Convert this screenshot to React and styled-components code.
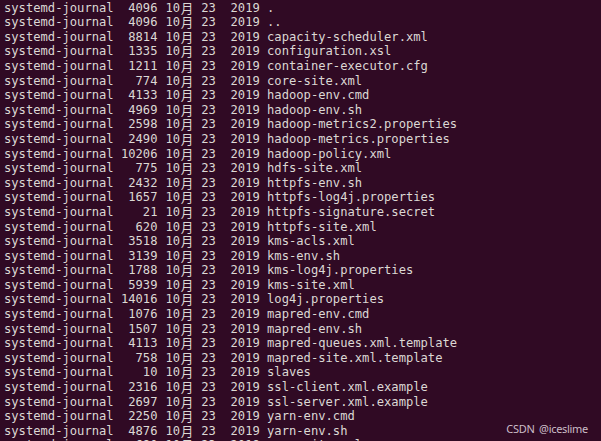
import React from "react";
import styled, { createGlobalStyle } from "styled-components";

const GlobalStyle = createGlobalStyle`
  html, body {
    margin: 0;
    padding: 0;
    background: #300a24;
  }
`;

const files = [
  [4096, "."],
  [4096, ".."],
  [8814, "capacity-scheduler.xml"],
  [1335, "configuration.xsl"],
  [1211, "container-executor.cfg"],
  [774, "core-site.xml"],
  [4133, "hadoop-env.cmd"],
  [4969, "hadoop-env.sh"],
  [2598, "hadoop-metrics2.properties"],
  [2490, "hadoop-metrics.properties"],
  [10206, "hadoop-policy.xml"],
  [775, "hdfs-site.xml"],
  [2432, "httpfs-env.sh"],
  [1657, "httpfs-log4j.properties"],
  [21, "httpfs-signature.secret"],
  [620, "httpfs-site.xml"],
  [3518, "kms-acls.xml"],
  [3139, "kms-env.sh"],
  [1788, "kms-log4j.properties"],
  [5939, "kms-site.xml"],
  [14016, "log4j.properties"],
  [1076, "mapred-env.cmd"],
  [1507, "mapred-env.sh"],
  [4113, "mapred-queues.xml.template"],
  [758, "mapred-site.xml.template"],
  [10, "slaves"],
  [2316, "ssl-client.xml.example"],
  [2697, "ssl-server.xml.example"],
  [2250, "yarn-env.cmd"],
  [4876, "yarn-env.sh"],
  [690, "yarn-site.xml"],
];

const Terminal = styled.div`
  position: relative;
  width: 601px;
  height: 441px;
  overflow: hidden;
  background: #300a24;
  color: #dcd8d4;
  font-family: "DejaVu Sans Mono", "Noto Sans CJK SC", monospace;
  font-size: 12.15px;
  padding: 0.6px 0 0 4px;
  box-sizing: border-box;
`;

const Row = styled.div`
  display: grid;
  grid-template-columns: 15ch 6ch 5ch 3ch 6ch auto;
  height: 14.6px;
  line-height: 14.6px;
  white-space: pre;
`;

const Cell = styled.span`
  text-align: ${(p) => (p.$right ? "right" : "left")};
  padding-left: ${(p) => (p.$pad ? "1ch" : "0")};
`;

const Wide = styled.span`
  display: inline-block;
  width: 2ch;
  text-align: center;
  font-family: "Noto Sans CJK SC", sans-serif;
  font-size: 12.6px;
  line-height: 14.6px;
  vertical-align: top;
`;

const Watermark = styled.div`
  position: absolute;
  right: 13px;
  bottom: 5px;
  font-family: "Noto Sans", "Liberation Sans", sans-serif;
  font-size: 11px;
  color: #cbbdc7;
  letter-spacing: -0.3px;
  word-spacing: 2px;
`;

export default function App() {
  return (
    <>
      <GlobalStyle />
      <Terminal>
        {files.map(([size, name]) => (
          <Row key={name}>
            <Cell>systemd-journal</Cell>
            <Cell $right>{size}</Cell>
            <Cell $right>
              10<Wide>月</Wide>
            </Cell>
            <Cell $right>23</Cell>
            <Cell $right>2019</Cell>
            <Cell $pad>{name}</Cell>
          </Row>
        ))}
        <Watermark>CSDN @iceslime</Watermark>
      </Terminal>
    </>
  );
}
